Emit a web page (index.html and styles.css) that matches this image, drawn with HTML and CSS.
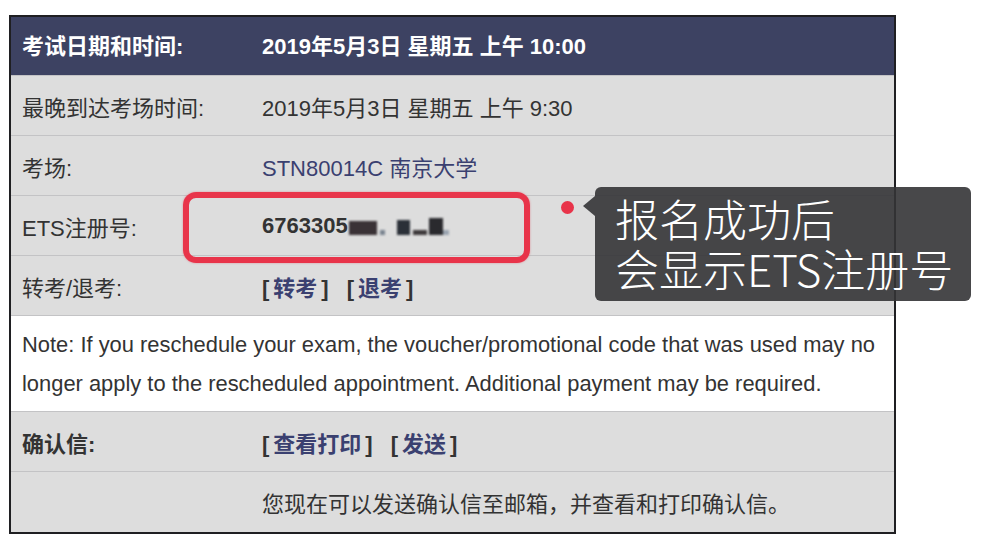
FILE: index.html
```html
<!DOCTYPE html>
<html lang="zh-CN">
<head>
<meta charset="utf-8">
<title>考试信息</title>
<link rel="stylesheet" href="styles.css">
</head>
<body>
<div class="stage">
  <div class="sheet">
    <div class="row head">
      <div class="label">考试日期和时间:</div>
      <div class="value">2019年5月3日 星期五 上午 10:00</div>
    </div>
    <div class="row">
      <div class="label">最晚到达考场时间:</div>
      <div class="value">2019年5月3日 星期五 上午 9:30</div>
    </div>
    <div class="row">
      <div class="label">考场:</div>
      <div class="value link">STN80014C 南京大学</div>
    </div>
    <div class="row">
      <div class="label">ETS注册号:</div>
      <div class="value strong">6763305<span class="blur"><i class="b1"></i><i class="b2"></i><i class="b3"></i><i class="b4"></i><i class="b5"></i><i class="b6"></i></span></div>
    </div>
    <div class="row">
      <div class="label">转考/退考:</div>
      <div class="value strong"><span class="grp">[<span class="lk">转考</span>]</span><span class="grp">[<span class="lk">退考</span>]</span></div>
    </div>
    <div class="row note">
      <p>Note: If you reschedule your exam, the voucher/promotional code that was used may no longer apply to the rescheduled appointment. Additional payment may be required.</p>
    </div>
    <div class="row">
      <div class="label strong">确认信:</div>
      <div class="value strong"><span class="grp">[<span class="lk">查看打印</span>]</span><span class="grp">[<span class="lk">发送</span>]</span></div>
    </div>
    <div class="row last">
      <div class="label"></div>
      <div class="value">您现在可以发送确认信至邮箱，并查看和打印确认信。</div>
    </div>
  </div>
  <div class="mark"></div>
  <div class="dot"></div>
  <div class="callout">报名成功后<br>会显示ETS注册号</div>
</div>
</body>
</html>
```

FILE: styles.css
```css
* { box-sizing: border-box; }
html, body {
  margin: 0;
  padding: 0;
  background: #ffffff;
}
body {
  font-family: "Liberation Sans", Arial, "Noto Sans CJK SC", sans-serif;
  color: #333333;
}
.stage {
  position: relative;
  width: 985px;
  height: 545px;
  padding: 15px 0 0 9px;
}
.sheet {
  width: 887px;
  border: 2px solid #1f1f22;
  background: #dddddd;
  display: flex;
  flex-direction: column;
}
.row {
  display: grid;
  grid-template-columns: 251px 1fr;
  align-items: center;
  height: 60px;
  border-top: 1px solid #c3c3c5;
  font-size: 22px;
  background: #dddddd;
}
.row.head {
  height: 58px;
  border-top: none;
  background: #3d4262;
  color: #ffffff;
  font-weight: bold;
  padding-bottom: 4px;
}
.row.note {
  display: block;
  height: 96px;
  background: #ffffff;
  padding: 9px 11px 0 11px;
}
.row.note p {
  margin: 0;
  font-size: 21.9px;
  line-height: 39px;
  color: #333333;
}
.row.last { height: 61px; }
.label {
  padding-left: 11px;
  white-space: nowrap;
}
.value { white-space: nowrap; }
.strong { font-weight: bold; }
.link { color: #3a4070; }
.lk { color: #3a4070; padding: 0 4px; }
.grp { margin-right: 18px; }
.blur {
  display: inline-flex;
  align-items: flex-end;
  height: 18px;
  margin-left: 1px;
  filter: blur(1.2px);
  vertical-align: -2px;
}
.blur i { display: block; background: #2c2c30; }
.blur .b1 { width: 28px; height: 14px; background: #3a3236; }
.blur .b2 { width: 5px; height: 5px; margin-left: 3px; background: #7a8490; }
.blur .b3 { width: 13px; height: 15px; margin-left: 12px; background: #2b3038; }
.blur .b4 { width: 14px; height: 5px; margin-left: 3px; background: #3e3a3c; }
.blur .b5 { width: 14px; height: 17px; margin-left: 2px; background: #2a2a2e; }
.blur .b6 { width: 6px; height: 5px; background: #9aa4b0; }
.mark {
  position: absolute;
  left: 183px;
  top: 192px;
  width: 347px;
  height: 71px;
  border: 6px solid #e8344a;
  border-radius: 13px;
  box-shadow: 0 0 2px rgba(232, 52, 74, 0.5);
}
.dot {
  position: absolute;
  left: 561px;
  top: 201px;
  width: 13px;
  height: 13px;
  border-radius: 50%;
  background: #e8344a;
}
.callout {
  position: absolute;
  left: 595px;
  top: 187px;
  width: 376px;
  height: 114px;
  border-radius: 6px;
  background: rgba(52, 52, 54, 0.9);
  color: #ffffff;
  font-family: "Noto Sans CJK SC", "Noto Sans", sans-serif;
  font-weight: 300;
  font-size: 44px;
  line-height: 50px;
  padding: 6px 0 0 20px;
  white-space: nowrap;
}
.callout::before {
  content: "";
  position: absolute;
  left: -12px;
  top: 9px;
  border-style: solid;
  border-width: 10px 12px 10px 0;
  border-color: transparent rgba(52, 52, 54, 0.9) transparent transparent;
}
```
